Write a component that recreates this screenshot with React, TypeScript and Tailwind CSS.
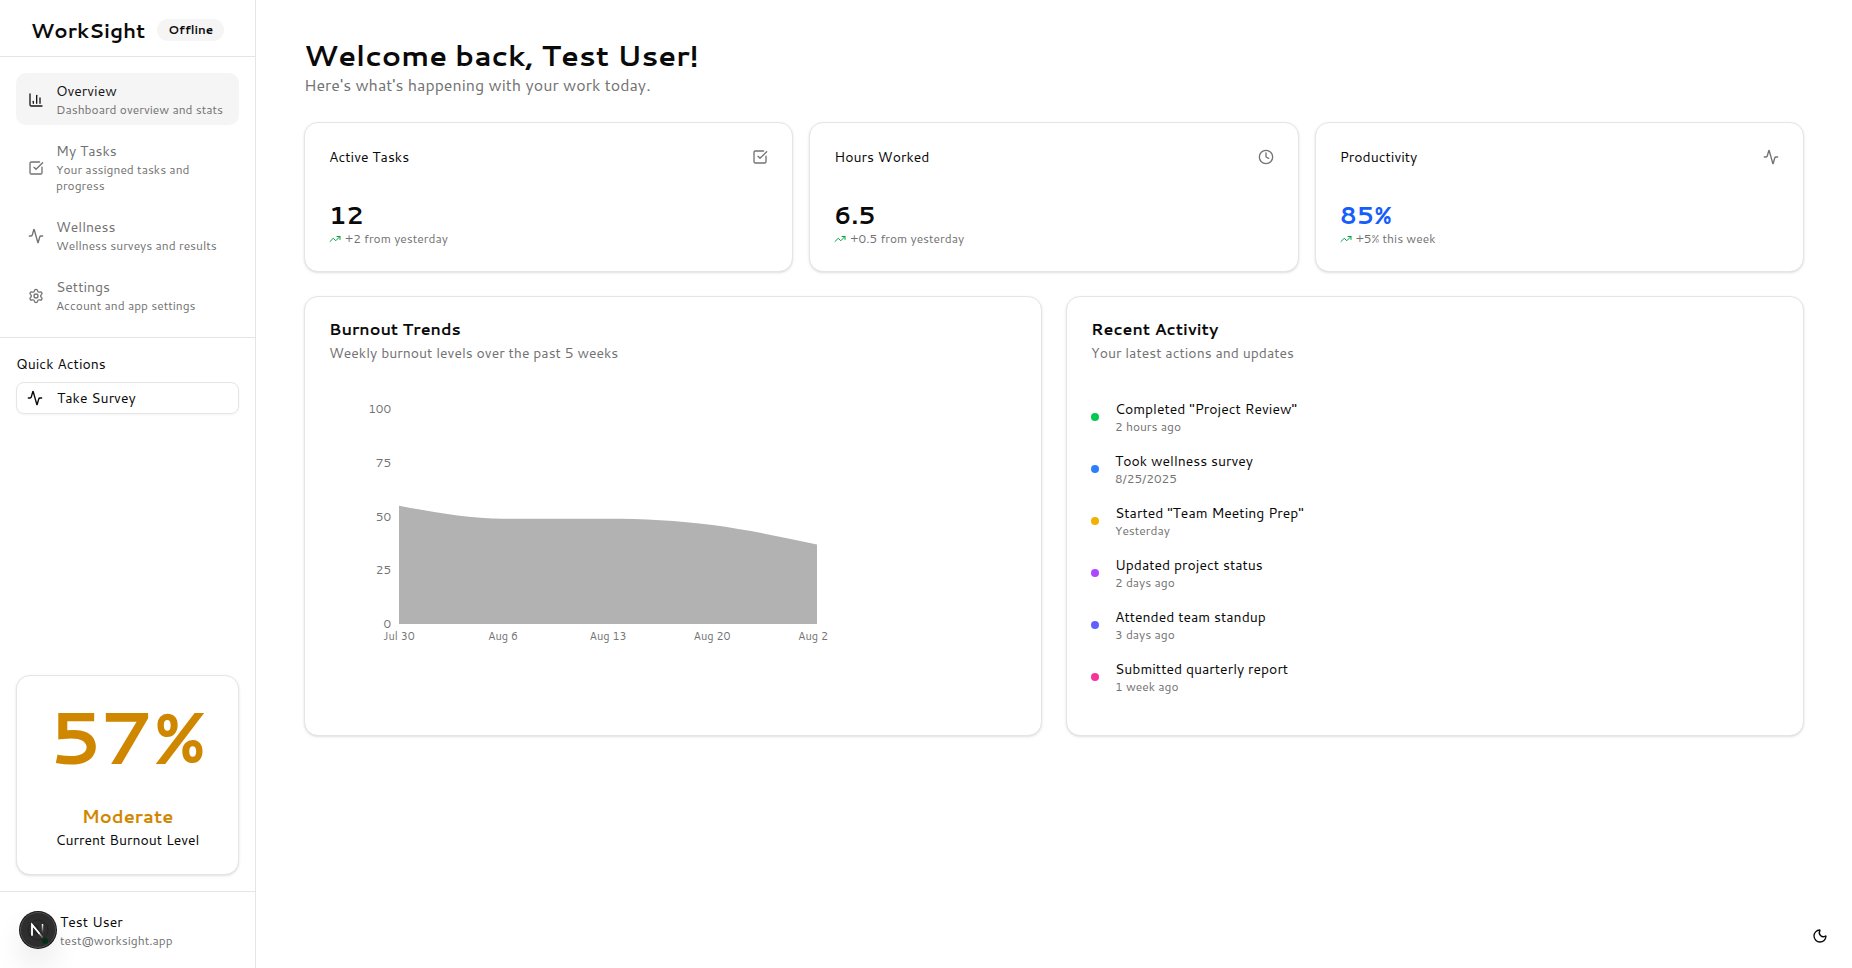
import type { ReactNode } from "react";
import {
  Activity,
  ChartColumn,
  Clock,
  Moon,
  Settings,
  SquareCheckBig,
  TrendingUp,
  type LucideIcon,
} from "lucide-react";

type NavItem = { title: string; description: string; icon: LucideIcon; active?: boolean };

const navItems: NavItem[] = [
  { title: "Overview", description: "Dashboard overview and stats", icon: ChartColumn, active: true },
  { title: "My Tasks", description: "Your assigned tasks and progress", icon: SquareCheckBig },
  { title: "Wellness", description: "Wellness surveys and results", icon: Activity },
  { title: "Settings", description: "Account and app settings", icon: Settings },
];

const stats = [
  { title: "Active Tasks", value: "12", change: "+2 from yesterday", icon: SquareCheckBig, color: "text-neutral-950" },
  { title: "Hours Worked", value: "6.5", change: "+0.5 from yesterday", icon: Clock, color: "text-neutral-950" },
  { title: "Productivity", value: "85%", change: "+5% this week", icon: Activity, color: "text-blue-600" },
];

const activities = [
  { title: 'Completed "Project Review"', time: "2 hours ago", color: "bg-green-500" },
  { title: "Took wellness survey", time: "8/25/2025", color: "bg-blue-500" },
  { title: 'Started "Team Meeting Prep"', time: "Yesterday", color: "bg-yellow-500" },
  { title: "Updated project status", time: "2 days ago", color: "bg-purple-500" },
  { title: "Attended team standup", time: "3 days ago", color: "bg-indigo-500" },
  { title: "Submitted quarterly report", time: "1 week ago", color: "bg-pink-500" },
];

function Card({ children, className = "" }: { children: ReactNode; className?: string }) {
  return (
    <section className={`rounded-[14px] border border-neutral-200 bg-white shadow-sm ${className}`}>
      {children}
    </section>
  );
}

function Sidebar() {
  return (
    <aside className="flex w-64 shrink-0 flex-col border-r border-neutral-200">
      <div className="flex h-[57px] items-center justify-center gap-3 border-b border-neutral-200 pt-1">
        <span className="text-xl font-semibold">WorkSight</span>
        <span className="rounded-full bg-neutral-100 px-[11px] py-[3px] text-xs leading-4 font-semibold">Offline</span>
      </div>

      <nav className="flex flex-col gap-2 border-b border-neutral-200 p-4">
        {navItems.map(({ title, description, icon: Icon, active }) => (
          <a
            key={title}
            href="#"
            className={`flex items-center gap-3 rounded-[10px] px-3 pt-2 pb-[7px] ${
              active ? "bg-neutral-100 text-neutral-900" : "text-neutral-500"
            }`}
          >
            <Icon className="size-4 shrink-0" />
            <span className="flex flex-col gap-px">
              <span className="text-sm">{title}</span>
              <span className="text-xs text-neutral-500">{description}</span>
            </span>
          </a>
        ))}
      </nav>

      <div className="flex flex-col gap-2 p-4">
        <h2 className="text-sm">Quick Actions</h2>
        <button
          type="button"
          className="flex h-8 items-center gap-[14px] rounded-lg border border-neutral-200 px-[10px] text-sm shadow-xs"
        >
          <Activity className="size-4" />
          Take Survey
        </button>
      </div>

      <div className="mt-auto p-4">
        <Card className="flex flex-col items-center p-6 text-center">
          <p className="text-7xl font-bold text-yellow-600">57%</p>
          <p className="mt-[30px] text-lg font-semibold text-yellow-600">Moderate</p>
          <p className="text-sm">Current Burnout Level</p>
        </Card>
      </div>

      <div className="flex h-[77px] items-center gap-[3px] border-t border-neutral-200 pl-[19px]">
        <UserBadge />
        <div className="flex flex-col gap-px">
          <span className="text-sm">Test User</span>
          <span className="text-xs text-neutral-500">test@worksight.app</span>
        </div>
      </div>
    </aside>
  );
}

function UserBadge() {
  return (
    <button type="button" aria-label="Developer tools" className="rounded-full shadow-[0_16px_32px_-8px_rgba(0,0,0,0.24)]">
      <svg className="size-[38px]" viewBox="0 0 38 38" fill="none">
        <defs>
          <linearGradient id="diag" x1="20" y1="21" x2="25" y2="27" gradientUnits="userSpaceOnUse">
            <stop stopColor="#fff" />
            <stop offset="1" stopColor="#fff" stopOpacity="0" />
          </linearGradient>
          <linearGradient id="stem" x1="24" y1="13" x2="24" y2="22" gradientUnits="userSpaceOnUse">
            <stop stopColor="#fff" />
            <stop offset="1" stopColor="#fff" stopOpacity="0" />
          </linearGradient>
        </defs>
        <circle cx="19" cy="19" r="19" fill="#171717" />
        <circle cx="19" cy="19" r="17.5" fill="#2e2e2e" stroke="#505050" />
        <circle cx="19" cy="19" r="10" stroke="#232323" />
        <circle cx="16" cy="17.5" r="3" stroke="#1c1c1c" />
        <path d="M10 25c1-4 11-4 12 0" stroke="#1c1c1c" />
        <path d="M13 24.500V13.500L24 27" stroke="url(#diag)" strokeWidth="1.500" />
        <path d="M13 24.500V13.500L20.500 22.700" stroke="#fff" strokeWidth="1.500" />
        <path d="M23.500 13v9" stroke="url(#stem)" strokeWidth="1.500" />
        <circle cx="26" cy="30" r="3" fill="#052e16" />
      </svg>
    </button>
  );
}

const yTicks = [
  { label: "100", y: 26 },
  { label: "75", y: 80 },
  { label: "50", y: 134 },
  { label: "25", y: 187 },
  { label: "0", y: 241 },
];

const xTicks = [
  { label: "Jul 30", x: 62 },
  { label: "Aug 6", x: 166 },
  { label: "Aug 13", x: 271 },
  { label: "Aug 20", x: 375 },
  { label: "Aug 2", x: 476 },
];

function BurnoutChart() {
  return (
    <svg className="max-w-full" width="504" height="300" viewBox="0 0 504 300" role="img" aria-label="Weekly burnout levels">
      <path
        d="M62 118.750C96.800 125.200 131.700 131.650 166.500 131.650H271C305.800 131.650 340.700 133.400 375.500 138.100C410.300 142.800 445.200 150 480 157.450V237H62Z"
        fill="#b2b2b2"
      />
      <g className="fill-neutral-500 text-xs" textAnchor="end">
        {yTicks.map((t) => (
          <text key={t.label} x="54" y={t.y}>{t.label}</text>
        ))}
      </g>
      <g className="fill-neutral-500 text-[11px]" textAnchor="middle">
        {xTicks.map((t) => (
          <text key={t.label} x={t.x} y="253">{t.label}</text>
        ))}
      </g>
    </svg>
  );
}

function CardHeading({ title, description }: { title: string; description: string }) {
  return (
    <header className="flex flex-col gap-[6px]">
      <h2 className="text-base leading-4 font-semibold">{title}</h2>
      <p className="text-sm text-neutral-500">{description}</p>
    </header>
  );
}

export default function App() {
  return (
    <div className="flex min-h-screen bg-white font-['Cantarell','Noto_Sans',sans-serif] text-neutral-950">
      <Sidebar />
      <main className="flex min-w-0 flex-1 flex-col gap-6 px-12 py-[37px]">
        <header className="pb-px">
          <h1 className="text-[29px] leading-9 font-bold">Welcome back, Test User!</h1>
          <p className="text-base text-neutral-500">Here's what's happening with your work today.</p>
        </header>

        <div className="grid grid-cols-3 gap-4">
          {stats.map(({ title, value, change, icon: Icon, color }) => (
            <Card key={title} className="p-6">
              <div className="flex items-center justify-between">
                <h2 className="text-sm">{title}</h2>
                <Icon className="size-4 text-neutral-500" />
              </div>
              <p className={`mt-8 text-2xl font-bold ${color}`}>{value}</p>
              <p className="flex items-center gap-1 text-xs text-neutral-500">
                <TrendingUp className="size-3 text-green-600" />
                {change}
              </p>
            </Card>
          ))}
        </div>

        <div className="grid grid-cols-2 gap-6">
          <Card className="p-6">
            <CardHeading title="Burnout Trends" description="Weekly burnout levels over the past 5 weeks" />
            <div className="mt-6 pl-2">
              <BurnoutChart />
            </div>
          </Card>
          <Card className="p-6">
            <CardHeading title="Recent Activity" description="Your latest actions and updates" />
            <ul className="mt-9 mb-4 flex flex-col gap-4">
              {activities.map((a) => (
                <li key={a.title} className="flex items-center gap-4">
                  <span className={`size-2 rounded-full ${a.color}`} />
                  <div className="flex flex-col">
                    <span className="text-sm">{a.title}</span>
                    <span className="text-xs text-neutral-500">{a.time}</span>
                  </div>
                </li>
              ))}
            </ul>
          </Card>
        </div>
      </main>

      <button
        type="button"
        aria-label="Toggle theme"
        className="fixed right-4 bottom-4 flex size-8 items-center justify-center rounded-lg"
      >
        <Moon className="size-4" />
      </button>
    </div>
  );
}
